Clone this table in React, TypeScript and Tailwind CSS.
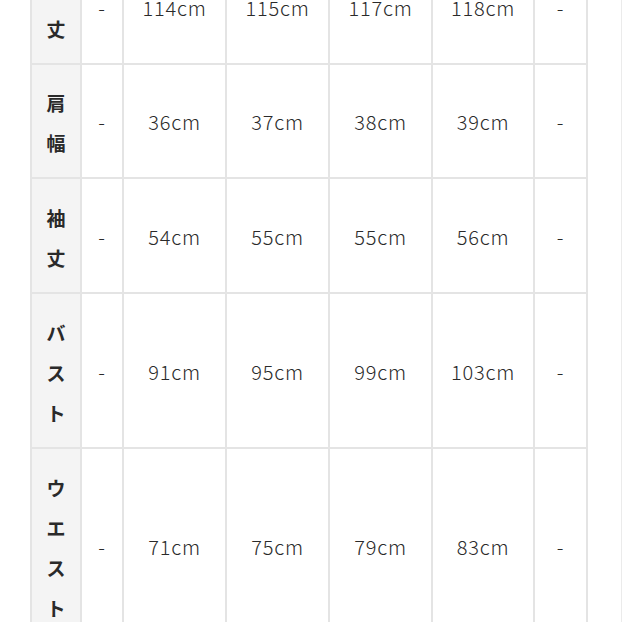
import React from "react";

const rows: { label: string; values: string[]; h: string }[] = [
  { label: "着丈", values: ["-", "114cm", "115cm", "117cm", "118cm", "-"], h: "h-[112px]" },
  { label: "肩幅", values: ["-", "36cm", "37cm", "38cm", "39cm", "-"], h: "h-[112px]" },
  { label: "袖丈", values: ["-", "54cm", "55cm", "55cm", "56cm", "-"], h: "h-[113px]" },
  { label: "バスト", values: ["-", "91cm", "95cm", "99cm", "103cm", "-"], h: "h-[153px]" },
  { label: "ウエスト", values: ["-", "71cm", "75cm", "79cm", "83cm", "-"], h: "h-[194px]" },
];

export default function App() {
  return (
    <div
      className="w-[622px] h-[622px] overflow-hidden bg-white text-[#2a2a2a] border-r border-[#ebebeb]"
      style={{ fontFamily: '"Noto Sans CJK JP", "Noto Sans", sans-serif' }}
    >
      <div className="ml-[30px] -mt-[51px] w-[558px] bg-[#e4e4e4] p-[2px] grid grid-cols-[48px_40px_101px_101px_101px_100px_51px] gap-[2px]">
        {rows.map((r) => (
          <React.Fragment key={r.label}>
            <div className={`${r.h} bg-[#f4f4f4] flex flex-col items-center justify-center pt-[4px]`}>
              {r.label.split("").map((c, i) => (
                <span key={i} className="block text-[19px] font-bold leading-[40px]">
                  {c}
                </span>
              ))}
            </div>
            {r.values.map((v, i) => (
              <div
                key={i}
                className={`${r.h} bg-white flex items-center justify-center pt-[2px] text-[20px] font-light tracking-[0.04em] leading-none`}
              >
                {v}
              </div>
            ))}
          </React.Fragment>
        ))}
      </div>
    </div>
  );
}
